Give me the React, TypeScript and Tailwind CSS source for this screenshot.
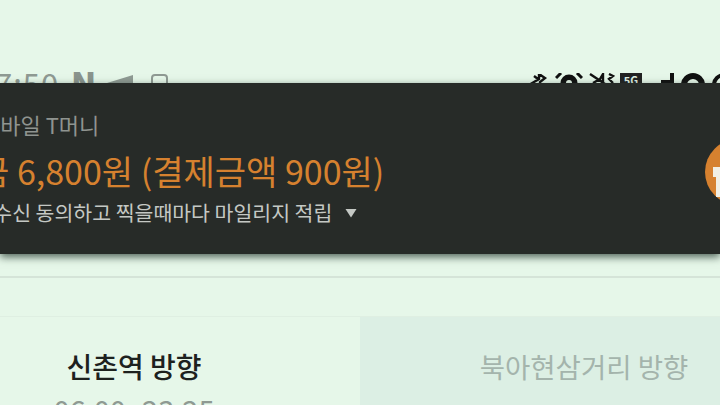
const font = { fontFamily: '"Noto Sans CJK KR", "Noto Sans", sans-serif' };

function StatusBar() {
  return (
    <div className="h-[83px] shrink-0 overflow-hidden flex items-start justify-between pt-[65px]">
      <div className="flex items-start -ml-[5px] text-[#8f9a93]">
        <span className="text-[31px] leading-[36px] tracking-[1px] w-[76px] shrink-0">7:50</span>
        <span className="text-[33px] leading-[36px] font-black text-[#8a948d] w-[35px] shrink-0">N</span>
        <svg width="27" height="8" viewBox="0 0 27 8" className="ml-[1px] mt-[10px] shrink-0">
          <path d="M0 8 L26 0 V8 Z" fill="#8f9a93" />
        </svg>
        <svg width="20" height="20" viewBox="0 0 20 20" className="ml-[16px] mt-[8px] shrink-0">
          <rect x="2" y="2" width="15" height="18" rx="3" fill="none" stroke="#8f9a93" strokeWidth="2" />
        </svg>
      </div>
      <div className="flex items-start -mr-[6px] mt-[8px] text-black">
        <svg width="20" height="11" viewBox="0 0 20 11" className="mt-[1px]">
          <path d="M0 11 L10 5 L10 0 L16 4 L11 8 L11 12 M5 2 L9 5" fill="none" stroke="#111" strokeWidth="2.4" />
        </svg>
        <svg width="28" height="11" viewBox="0 0 28 11" className="ml-[6px]">
          <circle cx="14" cy="10" r="8.5" fill="#111" />
          <circle cx="14" cy="10" r="3" fill="#e6f7e9" />
          <path d="M1 5 L6 0 M27 5 L22 0" stroke="#111" strokeWidth="3" />
        </svg>
        <svg width="26" height="11" viewBox="0 0 26 11" className="ml-[6px]">
          <path d="M1 1 L16 11 M4 10 L11 6 L14 1 L14 11 M20 1 L24 3 L20 6 L24 10" fill="none" stroke="#111" strokeWidth="2.4" />
        </svg>
        <span className="ml-[5px] w-[22px] h-[14px] bg-[#222] text-[#dfeee3] text-[11px] leading-[14px] font-bold text-center">5G</span>
        <svg width="13" height="11" viewBox="0 0 13 11" className="ml-[19px]">
          <path d="M9 0 H13 V11 H0 V7 H9 Z" fill="#111" />
        </svg>
        <svg width="26" height="11" viewBox="0 0 26 11" className="ml-[6px]">
          <circle cx="13" cy="12" r="9" fill="none" stroke="#111" strokeWidth="6" />
        </svg>
        <svg width="16" height="11" viewBox="0 0 16 11" className="ml-[4px]">
          <circle cx="14" cy="12" r="10" fill="none" stroke="#111" strokeWidth="4" />
        </svg>
      </div>
    </div>
  );
}

function Notification() {
  return (
    <div className="relative z-10 h-[171px] shrink-0 bg-[#272b28] shadow-[0_3px_8px_rgba(30,50,40,0.75)] flex items-center justify-between">
      <div className="-mt-[1px] whitespace-nowrap">
        <div className="-ml-[20px] text-[22px] leading-[30px] text-[#8f9490]">모바일 T머니</div>
        <div className="-ml-[22px] mt-[10px] text-[34px] leading-[44px] text-[#d6812f]">금 6,800원 (결제금액 900원)</div>
        <div className="-ml-[49px] mt-[4px] flex items-center text-[20.5px] leading-[30px] text-[#c4c8c4]">
          <span>수신 수신 동의하고 찍을때마다 마일리지 적립</span>
          <svg width="12" height="10" viewBox="0 0 12 10" className="ml-[13px] mt-[1px] shrink-0">
            <path d="M0.5 1 H11.5 L6 9.5 Z" fill="#c4c8c4" />
          </svg>
        </div>
      </div>
      <div className="-mr-[51px] mt-[7px] w-[66px] h-[66px] rounded-full bg-[#d6812f] shrink-0 flex items-center">
        <div className="ml-[8px] mt-[20px] flex flex-col">
          <div className="w-[36px] h-[10px] bg-[#f1efe4]" />
          <div className="w-[12px] h-[20px] ml-[3px] bg-[#f1efe4]" />
        </div>
      </div>
    </div>
  );
}

function Tab({ title, time, active }: { title: string; time?: string; active?: boolean }) {
  return (
    <div className={`w-[452px] shrink-0 flex flex-col items-center pt-[30px] ${active ? "bg-[#e6f7e9]" : "bg-[#dcefe4]"}`}>
      <div className={`leading-[38px] ${active ? "text-[28px] text-[#1d211e] font-medium" : "text-[27.5px] text-[#a4b4ac] -ml-[4px]"}`}>{title}</div>
      {time && <div className="mt-[6px] text-[29px] leading-[36px] text-[#8f9a93]">{time}</div>}
    </div>
  );
}

export default function App() {
  return (
    <div className="w-[720px] h-[405px] overflow-hidden flex flex-col bg-[#e6f7e9]" style={font}>
      <StatusBar />
      <Notification />
      <div className="h-[24px] shrink-0 border-b-2 border-[#d5e4d8]" />
      <div className="h-[39px] shrink-0 border-b border-[#dfefe2]" />
      <div className="flex -ml-[92px]">
        <Tab title="신촌역 방향" time="06:00~23:25" active />
        <Tab title="북아현삼거리 방향" />
      </div>
    </div>
  );
}
